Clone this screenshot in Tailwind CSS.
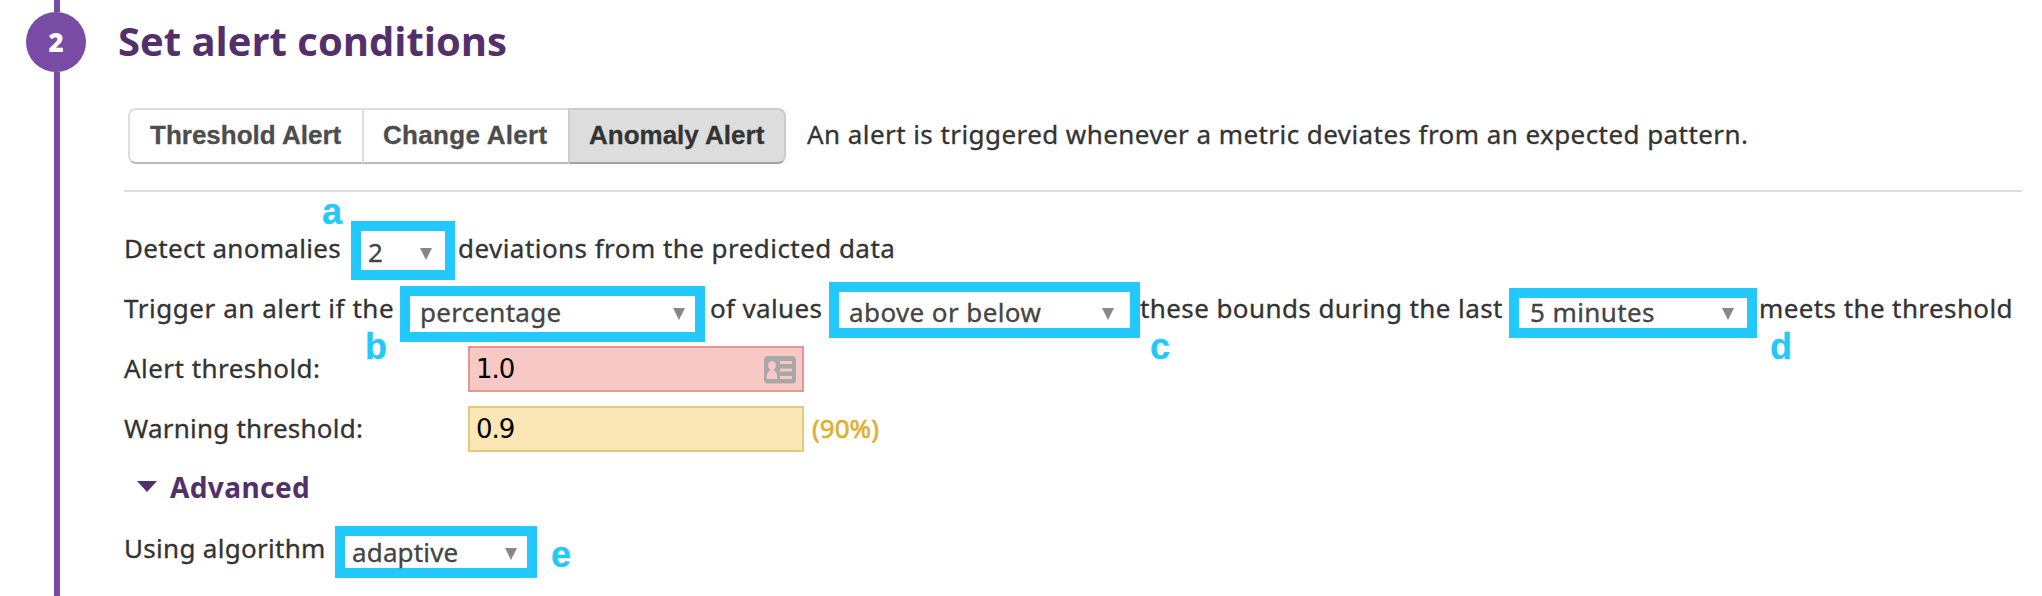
<!DOCTYPE html>
<html lang="en">
<head>
<meta charset="utf-8">
<title>Set alert conditions</title>
<script src="https://cdn.jsdelivr.net/npm/@tailwindcss/browser@4"></script>
</head>
<body class="bg-white">
<div class="flex h-[596px] w-[2042px] overflow-hidden font-['Noto_Sans',sans-serif] text-[26px] text-[#333] whitespace-nowrap">
  <!-- step rail -->
  <aside class="flex w-[119px] shrink-0 flex-col pl-[26px]">
    <div class="ml-7 h-3 w-1.5 shrink-0 bg-[#784ba4]"></div>
    <div class="size-[60px] shrink-0 rounded-full bg-[#784ba4] text-center font-['Open_Sans',sans-serif] font-extrabold leading-[60px] text-white">2</div>
    <div class="ml-7 w-1.5 flex-1 bg-[#784ba4]"></div>
  </aside>

  <main class="flex-1">
    <h1 class="-ml-px h-[108px] pt-[11px] font-['Open_Sans',sans-serif] text-[40px] font-bold leading-[60px] text-[#53306c]">Set alert conditions</h1>

    <div class="ml-[5px] flex h-[84px] w-[1898px] items-start border-b-2 border-[#ddd] pl-1">
      <div class="flex h-14 shrink-0 font-['Liberation_Sans',sans-serif] font-bold leading-[50px] text-[#4d4d4d] [-webkit-text-stroke:0.3px]">
        <button class="flex w-[234px] items-start rounded-l-lg border-2 border-r-0 border-[#ddd] border-b-[#bbb] pl-5">Threshold Alert</button>
        <button class="flex w-[206px] items-start border-2 border-r-0 border-[#ddd] border-b-[#bbb] pl-[19px] tracking-[0.3px]">Change Alert</button>
        <button class="flex w-[218px] items-start rounded-r-lg border-2 border-[#ccc] border-b-[#a3a3a3] bg-[#ddd] pl-[19px] text-[#333]">Anomaly Alert</button>
      </div>
      <p class="ml-[21px] leading-[52px] tracking-[0.433px] [-webkit-text-stroke:0.3px]">An alert is triggered whenever a metric deviates from an expected pattern.</p>
    </div>

    <section class="ml-[5px] pt-[26px] [-webkit-text-stroke:0.3px]">
      <div class="flex h-[60px] items-start leading-[60px]">
        <span class="w-[227px] shrink-0 tracking-[0.3px]">Detect anomalies</span>
        <div class="relative mt-[3px] flex h-[59px] w-[104px] shrink-0 items-start justify-between border-10 border-[#23c8fc] pr-[13px] pl-[7px] leading-[42px] text-[#444]">
          2<svg class="mt-[17px] size-3" viewBox="0 0 12 12" fill="#888"><path d="M0 0H12L6 12Z"/></svg>
          <b class="absolute -top-[39px] -left-[39px] font-['Liberation_Sans',sans-serif] text-[36px] leading-10 text-[#23c8fc]">a</b>
        </div>
        <span class="ml-[3px] tracking-[0.45px]">deviations from the predicted data</span>
      </div>

      <div class="flex h-[60px] items-start leading-[60px]">
        <span class="w-[276px] shrink-0 tracking-[0.55px]">Trigger an alert if the</span>
        <div class="relative mt-2 flex h-14 w-[305px] shrink-0 items-start justify-between border-10 border-[#23c8fc] pr-2.5 pl-2.5 leading-8 tracking-[0.27px] text-[#444]">
          percentage<svg class="mt-3 size-3" viewBox="0 0 12 12" fill="#888"><path d="M0 0H12L6 12Z"/></svg>
          <b class="absolute top-[31px] -left-[45px] font-['Liberation_Sans',sans-serif] text-[36px] leading-10 text-[#23c8fc]">b</b>
        </div>
        <span class="w-[124px] shrink-0 pl-[5px] tracking-[0.35px]">of values</span>
        <div class="relative mt-1 flex h-14 w-[311px] shrink-0 items-start justify-between border-10 border-[#23c8fc] pr-4 pl-2.5 leading-10 tracking-[0.4px] text-[#444]">
          above or below<svg class="mt-4 size-3" viewBox="0 0 12 12" fill="#888"><path d="M0 0H12L6 12Z"/></svg>
          <b class="absolute top-[35px] left-[311px] font-['Liberation_Sans',sans-serif] text-[36px] leading-10 text-[#23c8fc]">c</b>
        </div>
        <span class="w-[369px] shrink-0 tracking-[0.41px]">these bounds during the last</span>
        <div class="relative mt-2.5 flex h-[50px] w-[248px] shrink-0 items-start justify-between border-10 border-[#23c8fc] pr-[13px] pl-[11px] leading-7 tracking-[0.4px] text-[#444]">
          5 minutes<svg class="mt-2.5 size-3" viewBox="0 0 12 12" fill="#888"><path d="M0 0H12L6 12Z"/></svg>
          <b class="absolute top-[29px] left-[251px] font-['Liberation_Sans',sans-serif] text-[36px] leading-10 text-[#23c8fc]">d</b>
        </div>
        <span class="ml-0.5 tracking-[0.4px]">meets the threshold</span>
      </div>

      <div class="flex h-[60px] items-start leading-[60px]">
        <span class="w-[344px] shrink-0 tracking-[0.46px]">Alert threshold:</span>
        <div class="mt-2 flex h-[46px] w-[336px] shrink-0 items-start justify-between border-2 border-[#e09893] bg-[#f8c8c4] pr-1.5 pl-[6px] font-['DejaVu_Sans',sans-serif] leading-[42px] tracking-[-1px] text-black [-webkit-text-stroke:0]">
          1.0<svg class="mt-2 h-7 w-8" viewBox="0 0 32 28"><rect width="32" height="27.5" rx="4" fill="#a8a8a8"/><g fill="#f8c8c4"><ellipse cx="8" cy="9.5" rx="4" ry="4.5"/><path d="M6.2 12H9.8V14.5C12.5 15.5 13.3 18 13.3 23H2.7C2.7 18 3.5 15.5 6.2 14.5Z"/><path d="M16 5H28V8H16ZM16 12.5H28V15.5H16ZM16 20H28V23H16Z"/></g></svg>
        </div>
      </div>

      <div class="flex h-[60px] items-start leading-[60px]">
        <span class="w-[344px] shrink-0 tracking-[0.24px]">Warning threshold:</span>
        <div class="mt-2 h-[46px] w-[336px] shrink-0 border-2 border-[#e2ca7c] bg-[#fae7b5] pl-[6px] font-['DejaVu_Sans',sans-serif] leading-[42px] tracking-[-1px] text-black [-webkit-text-stroke:0]">0.9</div>
        <span class="ml-2 text-[#ddb02f] [-webkit-text-stroke:0.6px]">(90%)</span>
      </div>

      <div class="flex h-[60px] items-start pl-[13px] leading-[60px]">
        <svg class="mt-[23px] h-[11px] w-5" viewBox="0 0 20 11" fill="#53306c"><path d="M0 0H20L10 11Z"/></svg>
        <b class="ml-[13px] text-[28px] leading-[58px] tracking-[0.4px] text-[#53306c] [-webkit-text-stroke:0]">Advanced</b>
      </div>

      <div class="flex h-[60px] items-start leading-[60px]">
        <span class="w-[211px] shrink-0 tracking-[0.3px]">Using algorithm</span>
        <div class="relative mt-2 flex h-[52px] w-[202px] shrink-0 items-start justify-between border-10 border-[#23c8fc] pr-2.5 pl-[7px] leading-8 tracking-[0.15px] text-[#444]">
          adaptive<svg class="mt-3 size-3" viewBox="0 0 12 12" fill="#888"><path d="M0 0H12L6 12Z"/></svg>
          <b class="absolute -top-px left-[206px] font-['Liberation_Sans',sans-serif] text-[36px] leading-10 text-[#23c8fc]">e</b>
        </div>
      </div>
    </section>
  </main>
</div>
</body>
</html>
